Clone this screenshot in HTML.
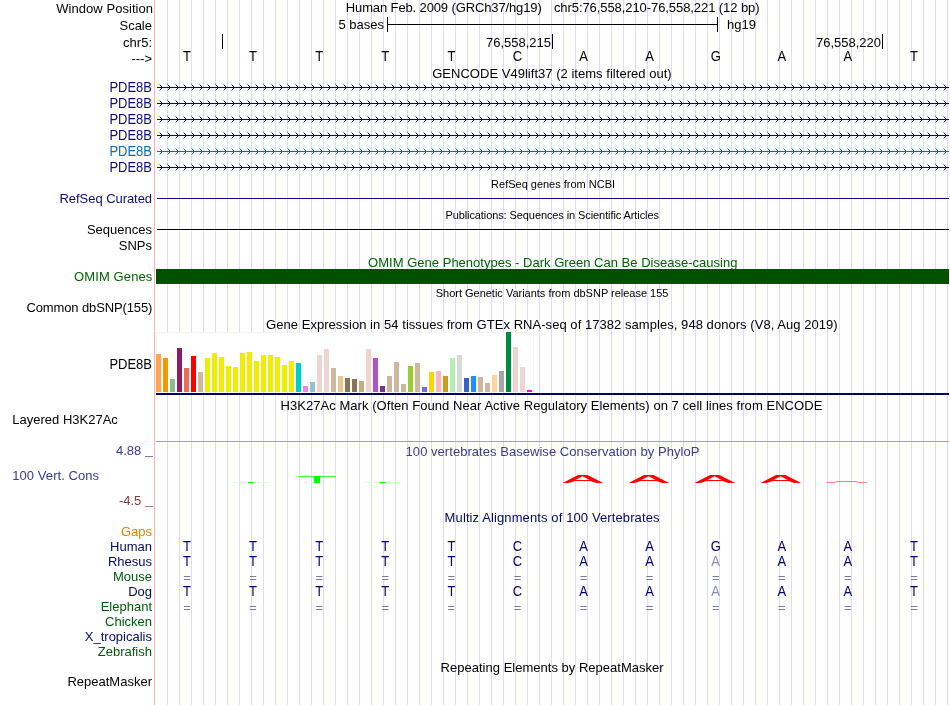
<!DOCTYPE html>
<html><head><meta charset="utf-8"><title>UCSC Genome Browser</title>
<style>
html,body{margin:0;padding:0;background:#fff;}
body{width:950px;height:705px;overflow:hidden;position:relative;font-family:"Liberation Sans",sans-serif;}
svg{position:absolute;left:0;top:0;will-change:transform;}
text{font-family:"Liberation Sans",sans-serif;}
.c{shape-rendering:crispEdges;}
.a{shape-rendering:geometricPrecision;}
</style></head><body>
<svg width="950" height="705" viewBox="0 0 950 705">

<path class="c" d="M167.5 0V705M179.5 0V705M191.5 0V705M203.5 0V705M215.5 0V705M227.5 0V705M239.5 0V705M251.5 0V705M263.5 0V705M275.5 0V705M287.5 0V705M299.5 0V705M311.5 0V705M323.5 0V705M335.5 0V705M347.5 0V705M359.5 0V705M371.5 0V705M383.5 0V705M395.5 0V705M407.5 0V705M419.5 0V705M431.5 0V705M443.5 0V705M455.5 0V705M467.5 0V705M479.5 0V705M491.5 0V705M503.5 0V705M515.5 0V705M527.5 0V705M539.5 0V705M551.5 0V705M563.5 0V705M575.5 0V705M587.5 0V705M599.5 0V705M611.5 0V705M623.5 0V705M635.5 0V705M647.5 0V705M659.5 0V705M671.5 0V705M683.5 0V705M695.5 0V705M707.5 0V705M719.5 0V705M731.5 0V705M743.5 0V705M755.5 0V705M767.5 0V705M779.5 0V705M791.5 0V705M803.5 0V705M815.5 0V705M827.5 0V705M839.5 0V705M851.5 0V705M863.5 0V705M875.5 0V705M887.5 0V705M899.5 0V705M911.5 0V705M923.5 0V705M935.5 0V705M947.5 0V705" stroke="#dcdcff" stroke-width="1" fill="none"/>
<path class="c" d="M154.5 0V705" stroke="#ffb4b4" stroke-width="1" fill="none"/>
<text x="152" y="30" font-size="13" text-anchor="end" fill="#000">Scale</text>
<text x="152" y="47" font-size="13" text-anchor="end" fill="#000">chr5:</text>
<text x="152" y="62.7" font-size="13" text-anchor="end" fill="#000">---&gt;</text>
<text x="152" y="92" font-size="13" text-anchor="end" fill="#0c0c78" transform="matrix(1 0 0 1.08 0 -7.360)">PDE8B</text>
<text x="152" y="108" font-size="13" text-anchor="end" fill="#0c0c78" transform="matrix(1 0 0 1.08 0 -8.640)">PDE8B</text>
<text x="152" y="124" font-size="13" text-anchor="end" fill="#0c0c78" transform="matrix(1 0 0 1.08 0 -9.920)">PDE8B</text>
<text x="152" y="140" font-size="13" text-anchor="end" fill="#0c0c78" transform="matrix(1 0 0 1.08 0 -11.200)">PDE8B</text>
<text x="152" y="156" font-size="13" text-anchor="end" fill="#0e6cb2" transform="matrix(1 0 0 1.08 0 -12.480)">PDE8B</text>
<text x="152" y="172" font-size="13" text-anchor="end" fill="#0c0c78" transform="matrix(1 0 0 1.08 0 -13.760)">PDE8B</text>
<text x="152" y="234" font-size="13" text-anchor="end" fill="#000">Sequences</text>
<text x="152" y="250" font-size="13" text-anchor="end" fill="#000">SNPs</text>
<text x="152" y="369" font-size="13" text-anchor="end" fill="#000" transform="matrix(1 0 0 1.08 0 -29.520)">PDE8B</text>
<text x="141.3" y="455" font-size="13" text-anchor="end" fill="#3c3c8c">4.88</text>
<rect class="c" x="145" y="456" width="8" height="1" fill="#7c7cb4"/>
<text x="141.3" y="505" font-size="13" text-anchor="end" fill="#8c3c3c">-4.5</text>
<rect class="c" x="145" y="506" width="8" height="1" fill="#b47c7c"/>
<text x="152" y="536" font-size="13" text-anchor="end" fill="#e68200">Gaps</text>
<text x="152" y="551" font-size="13" text-anchor="end" fill="#000a64">Human</text>
<text x="152" y="566" font-size="13" text-anchor="end" fill="#000a64">Rhesus</text>
<text x="152" y="581" font-size="13" text-anchor="end" fill="#005a0a">Mouse</text>
<text x="152" y="596" font-size="13" text-anchor="end" fill="#000a64">Dog</text>
<text x="152" y="611" font-size="13" text-anchor="end" fill="#005a0a">Elephant</text>
<text x="152" y="626" font-size="13" text-anchor="end" fill="#005a0a">Chicken</text>
<text x="152" y="641" font-size="13" text-anchor="end" fill="#000a64">X_tropicalis</text>
<text x="152" y="656" font-size="13" text-anchor="end" fill="#005a0a">Zebrafish</text>
<text x="152" y="686" font-size="13" text-anchor="end" fill="#000">RepeatMasker</text>
<text x="345.8" y="12" font-size="13" fill="#000" textLength="195.93" lengthAdjust="spacing">Human Feb. 2009 (GRCh37/hg19)</text>
<text x="553.9" y="12" font-size="13" fill="#000" textLength="205.70" lengthAdjust="spacing">chr5:76,558,210-76,558,221 (12 bp)</text>
<text x="432.2" y="78" font-size="13" fill="#000" textLength="239.45" lengthAdjust="spacing">GENCODE V49lift37 (2 items filtered out)</text>
<text x="491.1" y="188" font-size="11" fill="#000" textLength="123.92" lengthAdjust="spacing">RefSeq genes from NCBI</text>
<text x="445.4" y="219" font-size="11" fill="#000" textLength="213.58" lengthAdjust="spacing">Publications: Sequences in Scientific Articles</text>
<text x="368.1" y="267" font-size="13" fill="#006400" textLength="369.33" lengthAdjust="spacing">OMIM Gene Phenotypes - Dark Green Can Be Disease-causing</text>
<text x="435.7" y="297" font-size="11" fill="#000" textLength="232.76" lengthAdjust="spacing">Short Genetic Variants from dbSNP release 155</text>
<text x="266.0" y="329" font-size="13" fill="#000" textLength="571.70" lengthAdjust="spacing">Gene Expression in 54 tissues from GTEx RNA-seq of 17382 samples, 948 donors (V8, Aug 2019)</text>
<text x="280.5" y="410" font-size="13" fill="#000" textLength="541.80" lengthAdjust="spacing">H3K27Ac Mark (Often Found Near Active Regulatory Elements) on 7 cell lines from ENCODE</text>
<text x="405.6" y="456" font-size="13" fill="#3c3c8c" textLength="293.78" lengthAdjust="spacing">100 vertebrates Basewise Conservation by PhyloP</text>
<text x="444.6" y="522" font-size="13" fill="#000a64" textLength="214.92" lengthAdjust="spacing">Multiz Alignments of 100 Vertebrates</text>
<text x="440.6" y="672" font-size="13" fill="#000" textLength="223.08" lengthAdjust="spacing">Repeating Elements by RepeatMasker</text>
<text x="56.2" y="13" font-size="13" fill="#000" textLength="96.86" lengthAdjust="spacing">Window Position</text>
<text x="59.5" y="203" font-size="13" fill="#0c0c78" textLength="92.59" lengthAdjust="spacing">RefSeq Curated</text>
<text x="74.0" y="281" font-size="13" fill="#006400" textLength="78.30" lengthAdjust="spacing">OMIM Genes</text>
<text x="26.4" y="312" font-size="13" fill="#000" textLength="125.98" lengthAdjust="spacing">Common dbSNP(155)</text>
<text x="12.3" y="424" font-size="13" fill="#000" textLength="105.52" lengthAdjust="spacing">Layered H3K27Ac</text>
<text x="12.3" y="480" font-size="13" fill="#3c3c8c" textLength="86.75" lengthAdjust="spacing">100 Vert. Cons</text>
<text x="384" y="29" font-size="13" text-anchor="end" fill="#000">5 bases</text>
<text x="727" y="29" font-size="13" text-anchor="start" fill="#000">hg19</text>
<text x="551" y="47" font-size="13" text-anchor="end" fill="#000">76,558,215</text>
<text x="881" y="47" font-size="13" text-anchor="end" fill="#000">76,558,220</text>
<rect class="c" x="387" y="24" width="331" height="1" fill="#000"/>
<rect class="c" x="387" y="17" width="1" height="15" fill="#000"/>
<rect class="c" x="717" y="17" width="1" height="15" fill="#000"/>
<rect class="c" x="222" y="34" width="1" height="15" fill="#000"/>
<rect class="c" x="552" y="34" width="1" height="15" fill="#000"/>
<rect class="c" x="882" y="34" width="1" height="15" fill="#000"/>
<text x="187.0" y="61" font-size="13" text-anchor="middle" fill="#000" transform="matrix(1 0 0 1.08 0 -4.880)">T</text>
<text x="253.1" y="61" font-size="13" text-anchor="middle" fill="#000" transform="matrix(1 0 0 1.08 0 -4.880)">T</text>
<text x="319.2" y="61" font-size="13" text-anchor="middle" fill="#000" transform="matrix(1 0 0 1.08 0 -4.880)">T</text>
<text x="385.3" y="61" font-size="13" text-anchor="middle" fill="#000" transform="matrix(1 0 0 1.08 0 -4.880)">T</text>
<text x="451.4" y="61" font-size="13" text-anchor="middle" fill="#000" transform="matrix(1 0 0 1.08 0 -4.880)">T</text>
<text x="517.5" y="61" font-size="13" text-anchor="middle" fill="#000" transform="matrix(1 0 0 1.08 0 -4.880)">C</text>
<text x="583.5" y="61" font-size="13" text-anchor="middle" fill="#000" transform="matrix(1 0 0 1.08 0 -4.880)">A</text>
<text x="649.6" y="61" font-size="13" text-anchor="middle" fill="#000" transform="matrix(1 0 0 1.08 0 -4.880)">A</text>
<text x="715.7" y="61" font-size="13" text-anchor="middle" fill="#000" transform="matrix(1 0 0 1.08 0 -4.880)">G</text>
<text x="781.8" y="61" font-size="13" text-anchor="middle" fill="#000" transform="matrix(1 0 0 1.08 0 -4.880)">A</text>
<text x="847.9" y="61" font-size="13" text-anchor="middle" fill="#000" transform="matrix(1 0 0 1.08 0 -4.880)">A</text>
<text x="914.0" y="61" font-size="13" text-anchor="middle" fill="#000" transform="matrix(1 0 0 1.08 0 -4.880)">T</text>
<defs>
<pattern id="cvn" x="158" y="84" width="8" height="16" patternUnits="userSpaceOnUse" shape-rendering="crispEdges"><rect x="1" y="0" width="1" height="1" fill="#0c0c78" fill-opacity="0.38"/><rect x="1" y="6" width="1" height="1" fill="#0c0c78" fill-opacity="0.38"/><rect x="2" y="1" width="1" height="1" fill="#0c0c78" fill-opacity="0.92"/><rect x="2" y="5" width="1" height="1" fill="#0c0c78" fill-opacity="0.92"/><rect x="3" y="2" width="1" height="1" fill="#0c0c78" fill-opacity="1"/><rect x="3" y="4" width="1" height="1" fill="#0c0c78" fill-opacity="1"/><rect x="4" y="2" width="1" height="1" fill="#0c0c78" fill-opacity="0.1"/><rect x="4" y="4" width="1" height="1" fill="#0c0c78" fill-opacity="0.1"/><rect x="3" y="1" width="1" height="1" fill="#0c0c78" fill-opacity="0.18"/><rect x="3" y="5" width="1" height="1" fill="#0c0c78" fill-opacity="0.18"/><rect x="2" y="0" width="1" height="1" fill="#0c0c78" fill-opacity="0.08"/><rect x="2" y="6" width="1" height="1" fill="#0c0c78" fill-opacity="0.08"/></pattern>
<pattern id="cvb" x="158" y="84" width="8" height="16" patternUnits="userSpaceOnUse" shape-rendering="crispEdges"><rect x="1" y="0" width="1" height="1" fill="#0e6cb2" fill-opacity="0.38"/><rect x="1" y="6" width="1" height="1" fill="#0e6cb2" fill-opacity="0.38"/><rect x="2" y="1" width="1" height="1" fill="#0e6cb2" fill-opacity="0.92"/><rect x="2" y="5" width="1" height="1" fill="#0e6cb2" fill-opacity="0.92"/><rect x="3" y="2" width="1" height="1" fill="#0e6cb2" fill-opacity="1"/><rect x="3" y="4" width="1" height="1" fill="#0e6cb2" fill-opacity="1"/><rect x="4" y="2" width="1" height="1" fill="#0e6cb2" fill-opacity="0.1"/><rect x="4" y="4" width="1" height="1" fill="#0e6cb2" fill-opacity="0.1"/><rect x="3" y="1" width="1" height="1" fill="#0e6cb2" fill-opacity="0.18"/><rect x="3" y="5" width="1" height="1" fill="#0e6cb2" fill-opacity="0.18"/><rect x="2" y="0" width="1" height="1" fill="#0e6cb2" fill-opacity="0.08"/><rect x="2" y="6" width="1" height="1" fill="#0e6cb2" fill-opacity="0.08"/></pattern>
</defs>
<rect class="c" x="158" y="84" width="791" height="7" fill="url(#cvn)"/>
<rect class="c" x="157" y="87" width="792" height="1" fill="#0c0c78"/>
<rect class="c" x="158" y="100" width="791" height="7" fill="url(#cvn)"/>
<rect class="c" x="157" y="103" width="792" height="1" fill="#0c0c78"/>
<rect class="c" x="158" y="116" width="791" height="7" fill="url(#cvn)"/>
<rect class="c" x="157" y="119" width="792" height="1" fill="#0c0c78"/>
<rect class="c" x="158" y="132" width="791" height="7" fill="url(#cvn)"/>
<rect class="c" x="157" y="135" width="792" height="1" fill="#0c0c78"/>
<rect class="c" x="158" y="148" width="791" height="7" fill="url(#cvb)"/>
<rect class="c" x="157" y="151" width="792" height="1" fill="#0e6cb2"/>
<rect class="c" x="158" y="164" width="791" height="7" fill="url(#cvn)"/>
<rect class="c" x="157" y="167" width="792" height="1" fill="#0c0c78"/>
<rect class="c" x="157" y="198" width="792" height="1" fill="#0c0c78"/>
<rect class="c" x="157" y="229" width="792" height="1" fill="#000"/>
<rect class="c" x="156" y="269" width="793" height="15" fill="#005000"/>
<rect class="c" x="156" y="332" width="378" height="60" fill="#fff"/>
<path class="c" d="M156.5 392V332.5H533.5V392" stroke="#f4f4f4" stroke-width="1" fill="none"/>
<rect class="c" x="156" y="354" width="5" height="38" fill="#FFA54F"/>
<rect class="c" x="163" y="358" width="5" height="34" fill="#EE9A00"/>
<rect class="c" x="170" y="379" width="5" height="13" fill="#8FBC8F"/>
<rect class="c" x="177" y="348" width="5" height="44" fill="#8B1C62"/>
<rect class="c" x="184" y="368" width="5" height="24" fill="#EE6A50"/>
<rect class="c" x="191" y="356" width="5" height="36" fill="#FF0000"/>
<rect class="c" x="198" y="372" width="5" height="20" fill="#CDB79E"/>
<rect class="c" x="205" y="358" width="5" height="34" fill="#EEEE00"/>
<rect class="c" x="212" y="353" width="5" height="39" fill="#EEEE00"/>
<rect class="c" x="219" y="357" width="5" height="35" fill="#EEEE00"/>
<rect class="c" x="226" y="366" width="5" height="26" fill="#EEEE00"/>
<rect class="c" x="233" y="367" width="5" height="25" fill="#EEEE00"/>
<rect class="c" x="240" y="353" width="5" height="39" fill="#EEEE00"/>
<rect class="c" x="247" y="352" width="5" height="40" fill="#EEEE00"/>
<rect class="c" x="254" y="361" width="5" height="31" fill="#EEEE00"/>
<rect class="c" x="261" y="355" width="5" height="37" fill="#EEEE00"/>
<rect class="c" x="268" y="355" width="5" height="37" fill="#EEEE00"/>
<rect class="c" x="275" y="357" width="5" height="35" fill="#EEEE00"/>
<rect class="c" x="282" y="365" width="5" height="27" fill="#EEEE00"/>
<rect class="c" x="289" y="361" width="5" height="31" fill="#EEEE00"/>
<rect class="c" x="296" y="363" width="5" height="29" fill="#00CDCD"/>
<rect class="c" x="303" y="386" width="5" height="6" fill="#EE82EE"/>
<rect class="c" x="310" y="382" width="5" height="10" fill="#9AC0CD"/>
<rect class="c" x="317" y="355" width="5" height="37" fill="#EED5D2"/>
<rect class="c" x="324" y="349" width="5" height="43" fill="#EED5D2"/>
<rect class="c" x="331" y="368" width="5" height="24" fill="#CDB79E"/>
<rect class="c" x="338" y="376" width="5" height="16" fill="#EEC591"/>
<rect class="c" x="345" y="378" width="5" height="14" fill="#8B7355"/>
<rect class="c" x="352" y="379" width="5" height="13" fill="#8B7355"/>
<rect class="c" x="359" y="381" width="5" height="11" fill="#CDAA7D"/>
<rect class="c" x="366" y="349" width="5" height="43" fill="#EED5D2"/>
<rect class="c" x="373" y="358" width="5" height="34" fill="#B452CD"/>
<rect class="c" x="380" y="386" width="5" height="6" fill="#7A378B"/>
<rect class="c" x="387" y="376" width="5" height="16" fill="#CDB79E"/>
<rect class="c" x="394" y="362" width="5" height="30" fill="#CDB79E"/>
<rect class="c" x="401" y="384" width="5" height="8" fill="#CDB79E"/>
<rect class="c" x="408" y="366" width="5" height="26" fill="#9ACD32"/>
<rect class="c" x="415" y="363" width="5" height="29" fill="#CDB79E"/>
<rect class="c" x="422" y="387" width="5" height="5" fill="#7A67EE"/>
<rect class="c" x="429" y="372" width="5" height="20" fill="#FFD700"/>
<rect class="c" x="436" y="371" width="5" height="21" fill="#FFB6C1"/>
<rect class="c" x="443" y="376" width="5" height="16" fill="#CD9B1D"/>
<rect class="c" x="450" y="358" width="5" height="34" fill="#B4EEB4"/>
<rect class="c" x="457" y="355" width="5" height="37" fill="#D9D9D9"/>
<rect class="c" x="464" y="378" width="5" height="14" fill="#3A5FCD"/>
<rect class="c" x="471" y="376" width="5" height="16" fill="#1E90FF"/>
<rect class="c" x="478" y="377" width="5" height="15" fill="#CDB79E"/>
<rect class="c" x="485" y="383" width="5" height="9" fill="#CDB79E"/>
<rect class="c" x="492" y="375" width="5" height="17" fill="#FFD39B"/>
<rect class="c" x="499" y="371" width="5" height="21" fill="#A6A6A6"/>
<rect class="c" x="506" y="332" width="5" height="60" fill="#008B45"/>
<rect class="c" x="513" y="347" width="5" height="45" fill="#EED5D2"/>
<rect class="c" x="520" y="367" width="5" height="25" fill="#EED5D2"/>
<rect class="c" x="527" y="390" width="5" height="2" fill="#FF00FF"/>
<rect class="c" x="156" y="393" width="793" height="2" fill="#00006e"/>
<rect class="c" x="156" y="441" width="793" height="1" fill="#ff7f7f"/>
<rect class="c" x="232" y="482" width="38" height="1" fill="#e0ffe0"/>
<rect class="c" x="248" y="482" width="6" height="1" fill="#00ff00"/>
<rect class="c" x="364" y="482" width="38" height="1" fill="#e0ffe0"/>
<rect class="c" x="380" y="482" width="6" height="1" fill="#00ff00"/>
<rect class="c" x="298" y="476" width="38" height="1" fill="#3cff3c"/>
<rect class="c" x="314" y="476" width="6" height="7" fill="#00ff00"/>
<path class="a" fill-rule="evenodd" fill="#ff0000" d="M562.6 483L578 475L587.5 475L603.2 483L596.2 483L590.4 481L574.8 481L568.6 483ZM575.4 480L582.6 476.2L589.6 480Z"/>
<path class="a" fill-rule="evenodd" fill="#ff0000" d="M628.6 483L644 475L653.5 475L669.2 483L662.2 483L656.4 481L640.8 481L634.6 483ZM641.4 480L648.6 476.2L655.6 480Z"/>
<path class="a" fill-rule="evenodd" fill="#ff0000" d="M694.6 483L710 475L719.5 475L735.2 483L728.2 483L722.4 481L706.8 481L700.6 483ZM707.4 480L714.6 476.2L721.6 480Z"/>
<path class="a" fill-rule="evenodd" fill="#ff0000" d="M760.6 483L776 475L785.5 475L801.2 483L794.2 483L788.4 481L772.8 481L766.6 483ZM773.4 480L780.6 476.2L787.6 480Z"/>
<path class="a" d="M826.5 482.6L834 482.5L837.5 481.5L855.5 481.5L859 482.5L867 482.6" stroke="#ff2a2a" stroke-opacity="0.6" stroke-width="1" fill="none" stroke-linejoin="round"/>
<text x="187.0" y="551" font-size="13" text-anchor="middle" fill="#000078" transform="matrix(1 0 0 1.08 0 -44.080)">T</text>
<text x="253.1" y="551" font-size="13" text-anchor="middle" fill="#000078" transform="matrix(1 0 0 1.08 0 -44.080)">T</text>
<text x="319.2" y="551" font-size="13" text-anchor="middle" fill="#000078" transform="matrix(1 0 0 1.08 0 -44.080)">T</text>
<text x="385.3" y="551" font-size="13" text-anchor="middle" fill="#000078" transform="matrix(1 0 0 1.08 0 -44.080)">T</text>
<text x="451.4" y="551" font-size="13" text-anchor="middle" fill="#000078" transform="matrix(1 0 0 1.08 0 -44.080)">T</text>
<text x="517.5" y="551" font-size="13" text-anchor="middle" fill="#000078" transform="matrix(1 0 0 1.08 0 -44.080)">C</text>
<text x="583.5" y="551" font-size="13" text-anchor="middle" fill="#000078" transform="matrix(1 0 0 1.08 0 -44.080)">A</text>
<text x="649.6" y="551" font-size="13" text-anchor="middle" fill="#000078" transform="matrix(1 0 0 1.08 0 -44.080)">A</text>
<text x="715.7" y="551" font-size="13" text-anchor="middle" fill="#000078" transform="matrix(1 0 0 1.08 0 -44.080)">G</text>
<text x="781.8" y="551" font-size="13" text-anchor="middle" fill="#000078" transform="matrix(1 0 0 1.08 0 -44.080)">A</text>
<text x="847.9" y="551" font-size="13" text-anchor="middle" fill="#000078" transform="matrix(1 0 0 1.08 0 -44.080)">A</text>
<text x="914.0" y="551" font-size="13" text-anchor="middle" fill="#000078" transform="matrix(1 0 0 1.08 0 -44.080)">T</text>
<text x="187.0" y="566" font-size="13" text-anchor="middle" fill="#000078" transform="matrix(1 0 0 1.08 0 -45.280)">T</text>
<text x="253.1" y="566" font-size="13" text-anchor="middle" fill="#000078" transform="matrix(1 0 0 1.08 0 -45.280)">T</text>
<text x="319.2" y="566" font-size="13" text-anchor="middle" fill="#000078" transform="matrix(1 0 0 1.08 0 -45.280)">T</text>
<text x="385.3" y="566" font-size="13" text-anchor="middle" fill="#000078" transform="matrix(1 0 0 1.08 0 -45.280)">T</text>
<text x="451.4" y="566" font-size="13" text-anchor="middle" fill="#000078" transform="matrix(1 0 0 1.08 0 -45.280)">T</text>
<text x="517.5" y="566" font-size="13" text-anchor="middle" fill="#000078" transform="matrix(1 0 0 1.08 0 -45.280)">C</text>
<text x="583.5" y="566" font-size="13" text-anchor="middle" fill="#000078" transform="matrix(1 0 0 1.08 0 -45.280)">A</text>
<text x="649.6" y="566" font-size="13" text-anchor="middle" fill="#000078" transform="matrix(1 0 0 1.08 0 -45.280)">A</text>
<text x="715.7" y="566" font-size="13" text-anchor="middle" fill="#8c8cb4" transform="matrix(1 0 0 1.08 0 -45.280)">A</text>
<text x="781.8" y="566" font-size="13" text-anchor="middle" fill="#000078" transform="matrix(1 0 0 1.08 0 -45.280)">A</text>
<text x="847.9" y="566" font-size="13" text-anchor="middle" fill="#000078" transform="matrix(1 0 0 1.08 0 -45.280)">A</text>
<text x="914.0" y="566" font-size="13" text-anchor="middle" fill="#000078" transform="matrix(1 0 0 1.08 0 -45.280)">T</text>
<text x="187.0" y="596" font-size="13" text-anchor="middle" fill="#000078" transform="matrix(1 0 0 1.08 0 -47.680)">T</text>
<text x="253.1" y="596" font-size="13" text-anchor="middle" fill="#000078" transform="matrix(1 0 0 1.08 0 -47.680)">T</text>
<text x="319.2" y="596" font-size="13" text-anchor="middle" fill="#000078" transform="matrix(1 0 0 1.08 0 -47.680)">T</text>
<text x="385.3" y="596" font-size="13" text-anchor="middle" fill="#000078" transform="matrix(1 0 0 1.08 0 -47.680)">T</text>
<text x="451.4" y="596" font-size="13" text-anchor="middle" fill="#000078" transform="matrix(1 0 0 1.08 0 -47.680)">T</text>
<text x="517.5" y="596" font-size="13" text-anchor="middle" fill="#000078" transform="matrix(1 0 0 1.08 0 -47.680)">C</text>
<text x="583.5" y="596" font-size="13" text-anchor="middle" fill="#000078" transform="matrix(1 0 0 1.08 0 -47.680)">A</text>
<text x="649.6" y="596" font-size="13" text-anchor="middle" fill="#000078" transform="matrix(1 0 0 1.08 0 -47.680)">A</text>
<text x="715.7" y="596" font-size="13" text-anchor="middle" fill="#8c8cb4" transform="matrix(1 0 0 1.08 0 -47.680)">A</text>
<text x="781.8" y="596" font-size="13" text-anchor="middle" fill="#000078" transform="matrix(1 0 0 1.08 0 -47.680)">A</text>
<text x="847.9" y="596" font-size="13" text-anchor="middle" fill="#000078" transform="matrix(1 0 0 1.08 0 -47.680)">A</text>
<text x="914.0" y="596" font-size="13" text-anchor="middle" fill="#000078" transform="matrix(1 0 0 1.08 0 -47.680)">T</text>
<text x="187.0" y="582" font-size="13" text-anchor="middle" fill="#7878aa">=</text>
<text x="253.1" y="582" font-size="13" text-anchor="middle" fill="#7878aa">=</text>
<text x="319.2" y="582" font-size="13" text-anchor="middle" fill="#7878aa">=</text>
<text x="385.3" y="582" font-size="13" text-anchor="middle" fill="#7878aa">=</text>
<text x="451.4" y="582" font-size="13" text-anchor="middle" fill="#7878aa">=</text>
<text x="517.5" y="582" font-size="13" text-anchor="middle" fill="#7878aa">=</text>
<text x="583.5" y="582" font-size="13" text-anchor="middle" fill="#7878aa">=</text>
<text x="649.6" y="582" font-size="13" text-anchor="middle" fill="#7878aa">=</text>
<text x="715.7" y="582" font-size="13" text-anchor="middle" fill="#7878aa">=</text>
<text x="781.8" y="582" font-size="13" text-anchor="middle" fill="#7878aa">=</text>
<text x="847.9" y="582" font-size="13" text-anchor="middle" fill="#7878aa">=</text>
<text x="914.0" y="582" font-size="13" text-anchor="middle" fill="#7878aa">=</text>
<text x="187.0" y="612" font-size="13" text-anchor="middle" fill="#7878aa">=</text>
<text x="253.1" y="612" font-size="13" text-anchor="middle" fill="#7878aa">=</text>
<text x="319.2" y="612" font-size="13" text-anchor="middle" fill="#7878aa">=</text>
<text x="385.3" y="612" font-size="13" text-anchor="middle" fill="#7878aa">=</text>
<text x="451.4" y="612" font-size="13" text-anchor="middle" fill="#7878aa">=</text>
<text x="517.5" y="612" font-size="13" text-anchor="middle" fill="#7878aa">=</text>
<text x="583.5" y="612" font-size="13" text-anchor="middle" fill="#7878aa">=</text>
<text x="649.6" y="612" font-size="13" text-anchor="middle" fill="#7878aa">=</text>
<text x="715.7" y="612" font-size="13" text-anchor="middle" fill="#7878aa">=</text>
<text x="781.8" y="612" font-size="13" text-anchor="middle" fill="#7878aa">=</text>
<text x="847.9" y="612" font-size="13" text-anchor="middle" fill="#7878aa">=</text>
<text x="914.0" y="612" font-size="13" text-anchor="middle" fill="#7878aa">=</text>
</svg></body></html>
